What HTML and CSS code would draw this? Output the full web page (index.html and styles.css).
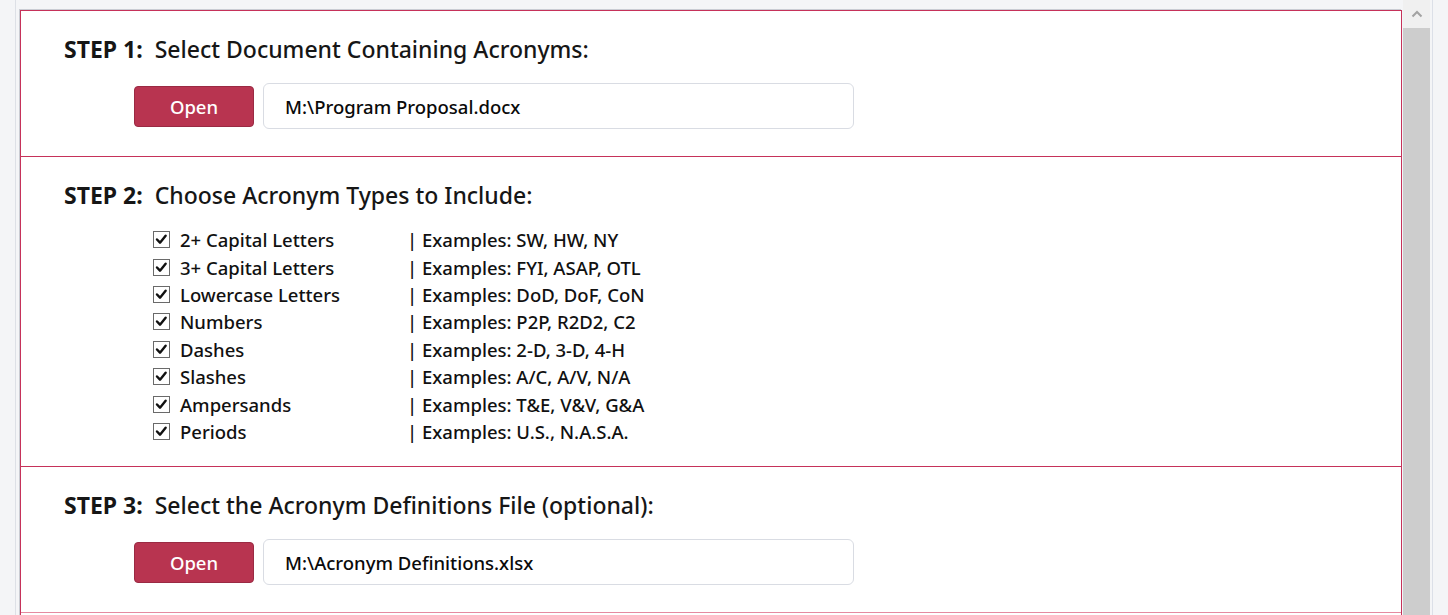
FILE: index.html
```html
<!DOCTYPE html>
<html lang="en">
<head>
    <meta charset="UTF-8">
    <meta name="viewport" content="width=device-width, initial-scale=1.0">
    <title>Acronym Finder</title>
    <link rel="stylesheet" href="styles.css">
</head>
<body>
    <div class="gutter-left"></div>

    <div class="viewport">
        <div class="panel">
            <div class="step">
                <h2><b>STEP 1:</b>&nbsp; Select Document Containing Acronyms:</h2>
                <div class="file-row">
                    <button class="open">Open</button>
                    <div class="path">M:\Program Proposal.docx</div>
                </div>
            </div>

            <div class="step step-list">
                <h2><b>STEP 2:</b>&nbsp; Choose Acronym Types to Include:</h2>
                <div class="types">
                    <span class="box"><svg viewBox="0 0 16 16"><path d="M3.2 8 L6.4 11.4 L12.4 4" /></svg></span>
                    <span>2+ Capital Letters</span>
                    <span>| Examples: SW, HW, NY</span>

                    <span class="box"><svg viewBox="0 0 16 16"><path d="M3.2 8 L6.4 11.4 L12.4 4" /></svg></span>
                    <span>3+ Capital Letters</span>
                    <span>| Examples: FYI, ASAP, OTL</span>

                    <span class="box"><svg viewBox="0 0 16 16"><path d="M3.2 8 L6.4 11.4 L12.4 4" /></svg></span>
                    <span>Lowercase Letters</span>
                    <span>| Examples: DoD, DoF, CoN</span>

                    <span class="box"><svg viewBox="0 0 16 16"><path d="M3.2 8 L6.4 11.4 L12.4 4" /></svg></span>
                    <span>Numbers</span>
                    <span>| Examples: P2P, R2D2, C2</span>

                    <span class="box"><svg viewBox="0 0 16 16"><path d="M3.2 8 L6.4 11.4 L12.4 4" /></svg></span>
                    <span>Dashes</span>
                    <span>| Examples: 2-D, 3-D, 4-H</span>

                    <span class="box"><svg viewBox="0 0 16 16"><path d="M3.2 8 L6.4 11.4 L12.4 4" /></svg></span>
                    <span>Slashes</span>
                    <span>| Examples: A/C, A/V, N/A</span>

                    <span class="box"><svg viewBox="0 0 16 16"><path d="M3.2 8 L6.4 11.4 L12.4 4" /></svg></span>
                    <span>Ampersands</span>
                    <span>| Examples: T&amp;E, V&amp;V, G&amp;A</span>

                    <span class="box"><svg viewBox="0 0 16 16"><path d="M3.2 8 L6.4 11.4 L12.4 4" /></svg></span>
                    <span>Periods</span>
                    <span>| Examples: U.S., N.A.S.A.</span>
                </div>
            </div>

            <div class="step">
                <h2><b>STEP 3:</b>&nbsp; Select the Acronym Definitions File (optional):</h2>
                <div class="file-row">
                    <button class="open">Open</button>
                    <div class="path">M:\Acronym Definitions.xlsx</div>
                </div>
            </div>

            <div class="step step-next"></div>
        </div>
    </div>

    <div class="scrollbar">
        <div class="arrow"><svg viewBox="0 0 12 8"><path d="M1.5 6.5 L6 2 L10.5 6.5" /></svg></div>
        <div class="thumb"></div>
    </div>

    <div class="gutter-right"></div>
</body>
</html>
```

FILE: styles.css
```css
html, body {
    height: 100%;
}
body {
    margin: 0;
    display: flex;
    background: #f4f5f7;
    font-family: 'Noto Sans', 'Open Sans', sans-serif;
    color: #111;
    overflow: hidden;
}
.gutter-left {
    width: 15px;
    flex: none;
    border-right: 1px solid #dde0e6;
}
.viewport {
    flex: 1;
    min-width: 0;
    padding: 10px 0 0 4px;
    overflow: hidden;
}
.panel {
    background: #fff;
    border: 1px solid #c6325a;
    border-bottom: none;
    box-shadow: -1px -1px 0 #c9ccd3;
}
.step {
    padding: 23px 0 27px 43px;
    border-bottom: 1px solid #c6325a;
}
.step-list {
    padding-bottom: 21px;
}
.step-next {
    height: 60px;
    box-sizing: border-box;
    border-bottom: none;
    border-top: 1px solid #e58aa0;
    margin-top: -1px;
}
h2 {
    margin: 0;
    font-size: 23px;
    line-height: 30px;
    font-weight: 500;
    color: #161616;
}
h2 b {
    font-weight: 700;
}
.file-row {
    display: flex;
    align-items: center;
    margin: 19px 0 0 70px;
}
.open {
    flex: none;
    width: 120px;
    height: 41px;
    background: #b83450;
    border: 1px solid #9a2a43;
    border-radius: 4px;
    color: #fff;
    font-family: inherit;
    font-size: 18.5px;
    font-weight: 500;
    padding: 0;
}
.path {
    flex: none;
    margin-left: 9px;
    width: 568px;
    height: 44px;
    padding-left: 21px;
    border: 1px solid #d9dce3;
    border-radius: 6px;
    display: flex;
    align-items: center;
    font-size: 18.5px;
    font-weight: 500;
    color: #0a0a0a;
}
.types {
    display: grid;
    grid-template-columns: 27px 227px auto;
    grid-auto-rows: 27.4px;
    align-items: center;
    margin: 16px 0 0 89px;
    font-size: 18.5px;
    font-weight: 500;
}
.box {
    width: 17px;
    height: 17px;
    box-sizing: border-box;
    border: 1px solid #6a6a6a;
    background: #fff;
    display: flex;
    align-items: center;
    justify-content: center;
}
.box svg {
    width: 15px;
    height: 15px;
    fill: none;
    stroke: #111;
    stroke-width: 2.6;
    stroke-linecap: round;
    stroke-linejoin: round;
}
.scrollbar {
    width: 27px;
    flex: none;
    display: flex;
    flex-direction: column;
    margin-left: 1px;
}
.arrow {
    height: 28px;
    background: #f0f0f0;
    display: flex;
    align-items: center;
    justify-content: center;
}
.arrow svg {
    width: 12px;
    height: 8px;
    fill: none;
    stroke: #a3a3a3;
    stroke-width: 2;
}
.thumb {
    flex: 1;
    background: #cdcdcd;
}
.gutter-right {
    width: 15px;
    flex: none;
    margin-left: 2px;
    border-left: 1px solid #dce0e8;
}
```
